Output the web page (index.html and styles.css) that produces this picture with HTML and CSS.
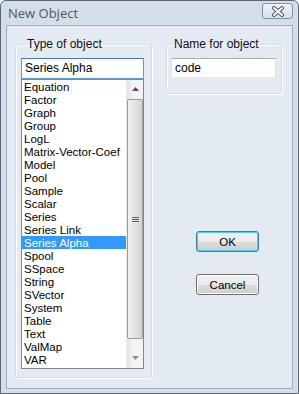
FILE: index.html
```html
<!DOCTYPE html>
<html lang="en">
<head>
    <meta charset="UTF-8">
    <meta name="viewport" content="width=device-width, initial-scale=1.0">
    <title>New Object</title>
    <link rel="stylesheet" href="styles.css">
</head>
<body>
    <div class="window">
        <div class="titlebar">
            <span class="title">New Object</span>
            <div class="close">
                <svg width="16" height="11" viewBox="0 0 16 11">
                    <path d="M4 2 L12 9 M12 2 L4 9" stroke="#4b5566" stroke-width="4" stroke-linecap="round"/>
                    <path d="M4 2 L12 9 M12 2 L4 9" stroke="#ffffff" stroke-width="2" stroke-linecap="round"/>
                </svg>
            </div>
        </div>
        <div class="client">
            <fieldset class="group type-group">
                <legend>Type of object</legend>
                <div class="edit focused">Series Alpha</div>
                <div class="listbox">
                    <ul class="items">
                        <li>Equation</li>
                        <li>Factor</li>
                        <li>Graph</li>
                        <li>Group</li>
                        <li>LogL</li>
                        <li>Matrix-Vector-Coef</li>
                        <li>Model</li>
                        <li>Pool</li>
                        <li>Sample</li>
                        <li>Scalar</li>
                        <li>Series</li>
                        <li>Series Link</li>
                        <li class="selected">Series Alpha</li>
                        <li>Spool</li>
                        <li>SSpace</li>
                        <li>String</li>
                        <li>SVector</li>
                        <li>System</li>
                        <li>Table</li>
                        <li>Text</li>
                        <li>ValMap</li>
                        <li>VAR</li>
                    </ul>
                    <div class="scrollbar">
                        <div class="arrow">
                            <svg width="7" height="4" viewBox="0 0 7 4"><path d="M3.5 0 L7 4 L0 4 Z" fill="#505050"/></svg>
                        </div>
                        <div class="thumb">
                            <span class="grip"></span>
                            <span class="grip"></span>
                            <span class="grip"></span>
                        </div>
                        <div class="arrow down">
                            <svg width="7" height="4" viewBox="0 0 7 4"><path d="M0 0 L7 0 L3.5 4 Z" fill="#909090"/></svg>
                        </div>
                    </div>
                </div>
            </fieldset>
            <div class="side">
                <fieldset class="group name-group">
                    <legend>Name for object</legend>
                    <div class="edit">code</div>
                </fieldset>
                <div class="buttons">
                    <div class="btn default">OK</div>
                    <div class="btn">Cancel</div>
                </div>
            </div>
        </div>
    </div>
</body>
</html>
```

FILE: styles.css
```css
* {
    box-sizing: border-box;
}

body {
    margin: 0;
    padding: 0;
    font-family: "Liberation Sans", Arial, sans-serif;
    font-size: 11px;
    background-color: #ffffff;
}

.window {
    width: 299px;
    height: 394px;
    border: 1px solid #5d6672;
    border-radius: 6px 6px 0 0;
    background-color: #d4dee9;
    display: flex;
    flex-direction: column;
}

.titlebar {
    height: 24px;
    display: flex;
    align-items: center;
    justify-content: space-between;
    padding: 0 5px 0 7px;
}

.title {
    font-family: "Open Sans", "Liberation Sans", sans-serif;
    font-size: 13px;
    color: #505861;
    margin-top: -1px;
}

.close {
    width: 31px;
    height: 16px;
    margin-top: -4px;
    border: 1px solid #8391a3;
    border-radius: 3px;
    background: linear-gradient(#eef2f7, #d7dfe9);
    display: flex;
    align-items: center;
    justify-content: center;
}

.client {
    flex: 1;
    margin: 0 5px 4px 5px;
    border: 1px solid #a0acba;
    background-color: #e4eaf2;
    display: flex;
    padding: 12px 0 0 8px;
    gap: 14px;
    align-items: flex-start;
}

.group {
    margin: 0;
    border: 1px solid #d2dbe3;
    border-radius: 3px;
    box-shadow: inset 1px 1px 0 #ffffff, 1px 1px 0 #ffffff;
    color: #000000;
}

.group legend {
    padding: 0 2px;
    margin-left: 4px;
    line-height: 13px;
    font-size: 12px;
    color: #111111;
}

.type-group {
    width: 137px;
    padding: 7px 7px 8px 5px;
}

.name-group {
    width: 116px;
    padding: 7px 5px 15px 4px;
}

.name-group legend {
    margin-left: 1px;
}

.edit {
    height: 20px;
    border: 1px solid #abadb3;
    border-top-color: #abadb3;
    border-left-color: #e2e3ea;
    border-right-color: #dbdfe6;
    border-bottom-color: #e3e9ef;
    background-color: #ffffff;
    padding: 0 0 0 3px;
    line-height: 18px;
    font-size: 12px;
    color: #000000;
}

.type-group .edit {
    width: 123px;
    height: 21px;
    line-height: 19px;
}

.name-group .edit {
    width: 105px;
}

.edit.focused {
    border-color: #5b9fd9;
    border-top-color: #3d7bad;
}

.listbox {
    width: 123px;
    height: 290px;
    border: 1px solid #828790;
    background-color: #ffffff;
    display: flex;
    overflow: hidden;
}

.items {
    list-style: none;
    margin: 0;
    padding: 0;
    flex: 1;
}

.items li {
    height: 13px;
    line-height: 14px;
    padding-left: 2px;
    font-size: 11.5px;
    color: #000000;
    white-space: nowrap;
}

.items li.selected {
    background-color: #3399ff;
    color: #ffffff;
}

.scrollbar {
    width: 17px;
    background: linear-gradient(to right, #e3e3e3, #f4f4f4 40%, #f4f4f4);
    display: flex;
    flex-direction: column;
    border-left: 1px solid #eaeaea;
}

.arrow {
    height: 17px;
    display: flex;
    align-items: center;
    justify-content: center;
}

.arrow.down {
    margin-top: auto;
    margin-bottom: 2px;
}

.thumb {
    height: 240px;
    margin: 2px 0 0 0;
    border: 1px solid #9b9b9b;
    border-radius: 2px;
    background: linear-gradient(to right, #f1f1f1, #e3e3e3 50%, #d3d3d3);
    display: flex;
    flex-direction: column;
    align-items: center;
    justify-content: center;
    gap: 1px;
}

.grip {
    width: 7px;
    height: 1px;
    background-color: #5f5f5f;
}

.buttons {
    display: flex;
    flex-direction: column;
    gap: 22px;
    margin: 137px 0 0 30px;
}

.btn {
    width: 63px;
    height: 21px;
    border: 1px solid #707070;
    border-radius: 3px;
    background: linear-gradient(#f2f2f2 0%, #ebebeb 50%, #dddddd 51%, #cfcfcf 100%);
    box-shadow: inset 0 0 0 1px #fcfcfc;
    display: flex;
    align-items: center;
    justify-content: center;
    font-size: 11.5px;
    color: #000000;
}

.btn.default {
    border-color: #3c7fb1;
    box-shadow: inset 0 0 0 1px #48d2f2;
}
```
